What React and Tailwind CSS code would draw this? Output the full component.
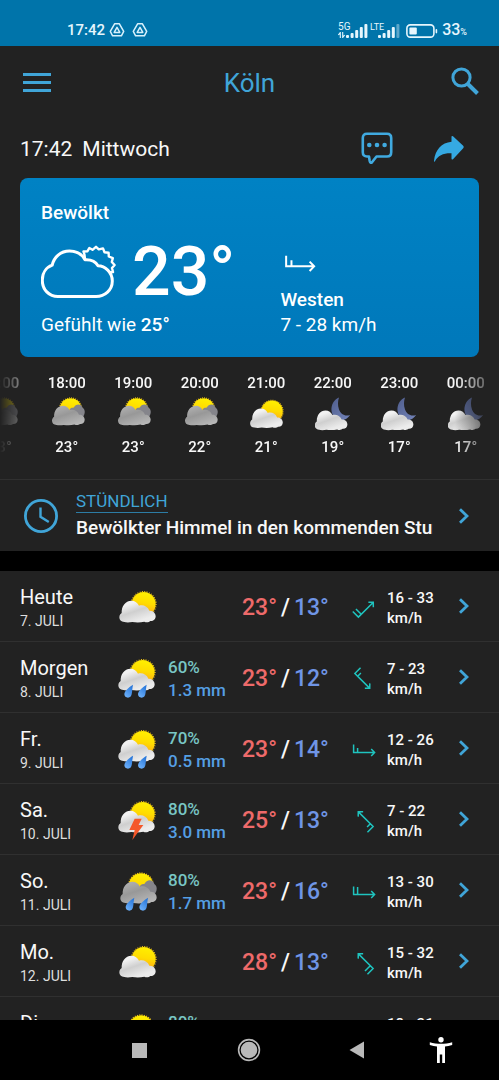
import React from "react";

const CLOUD = "M22 102C12 102 7 95 7 88C7 81 11 77 14 75C13 55 25 38 43 38C54 38 62 44 66 53C78 49 92 55 97 68C109 67 116 76 116 85C116 95 108 100 100 99C96 103 88 104 82 101C70 104 58 104 46 102C36 104 28 104 22 102Z";

function IconDefs() {
  return (
    <svg className="absolute h-0 w-0" aria-hidden="true">
      <defs>
        <linearGradient id="sun" x1="0.6" y1="0" x2="0.4" y2="1">
          <stop offset="0" stopColor="#fff000" />
          <stop offset="0.45" stopColor="#ffdc00" />
          <stop offset="1" stopColor="#ff9a1f" />
        </linearGradient>
        <linearGradient id="white-cloud" x1="0.2" y1="0.2" x2="0.6" y2="0.9">
          <stop offset="0" stopColor="#f2f2f2" />
          <stop offset="0.45" stopColor="#cfcfcf" />
          <stop offset="1" stopColor="#ececec" />
        </linearGradient>
        <linearGradient id="gray-cloud" x1="0.2" y1="0.1" x2="0.7" y2="1">
          <stop offset="0" stopColor="#adadad" />
          <stop offset="0.4" stopColor="#989898" />
          <stop offset="1" stopColor="#b8b8b8" />
        </linearGradient>
        <linearGradient id="moon" x1="0" y1="0" x2="1" y2="1">
          <stop offset="0" stopColor="#4f5d8c" />
          <stop offset="1" stopColor="#7485bb" />
        </linearGradient>
        <linearGradient id="drop" x1="0.8" y1="0" x2="0.2" y2="1">
          <stop offset="0" stopColor="#2373d8" />
          <stop offset="1" stopColor="#6fb2fb" />
        </linearGradient>
      </defs>
    </svg>
  );
}

function Sun({ x, y }) {
  return (
    <g>
      <circle cx={x} cy={y} r="36" fill="url(#sun)" />
      <circle cx={x} cy={y} r="37" fill="none" stroke="#f6c614" strokeWidth="4" strokeDasharray="3 4" />
    </g>
  );
}

function Drops() {
  return (
    <g fill="url(#drop)">
      <path d="M48 77C36 84 22 96 22 106C22 112 27 116 33 116C39 116 43 112 44 106C46 96 46 86 48 77Z" />
      <path d="M89 77C77 84 63 96 63 106C63 112 68 116 74 116C80 116 84 112 85 106C87 96 87 86 89 77Z" />
    </g>
  );
}

function WeatherIcon({ kind, className }) {
  return (
    <svg viewBox="0 0 120 120" className={className} role="img" aria-label={kind}>
      {kind === "sunny" && (
        <>
          <Sun x={80} y={48} />
          <path d={CLOUD} fill="url(#white-cloud)" />
        </>
      )}
      {(kind === "rain" || kind === "storm") && (
        <>
          <g transform="translate(-3 -9)">
            <Sun x={80} y={48} />
            <path d={CLOUD} fill="url(#white-cloud)" />
          </g>
          {kind === "rain" ? (
            <Drops />
          ) : (
            <path d="M53 53H74L65 72H79L46 117L53 87H37Z" fill="#f4582a" />
          )}
        </>
      )}
      {(kind === "cloudy" || kind === "showers") && (
        <>
          <Sun x={72} y={40} />
          <path d="M68 44C72 34 80 36 83 35C88 22 108 20 112 36C121 42 121 54 115 64L80 62Z" fill="#85858b" />
          <g transform="translate(3 -9)">
            <path d={CLOUD} fill="url(#gray-cloud)" />
          </g>
          {kind === "showers" && (
            <g transform="translate(4 0)">
              <Drops />
            </g>
          )}
        </>
      )}
      {kind === "night" && (
        <>
          <path d="M80 2C50 14 45 60 75 74C92 82 108 74 117 60C100 66 86 58 80 42C75 28 76 14 80 2Z" fill="url(#moon)" />
          <g transform="translate(-8 7)">
            <path d={CLOUD} fill="url(#white-cloud)" />
          </g>
        </>
      )}
    </svg>
  );
}

function WindArrow({ angle, strong, className }) {
  return (
    <svg viewBox="0 0 24 24" className={className} fill="none" stroke="currentColor" strokeWidth="1.5" aria-hidden="true">
      <g transform={`rotate(${angle} 12 12)`}>
        <path d={`M1.6 6.5V14.5H22.4M19.2 11L22.6 14.5L19.2 18M5.6 ${strong ? 7 : 10}V14.5`} />
      </g>
    </svg>
  );
}

function Chevron() {
  return (
    <svg viewBox="0 0 10 16" className="h-4 w-2.5" fill="none" stroke="#40a5d8" strokeWidth="2.8" aria-hidden="true">
      <path d="M1 1.3L8 8L1 14.7" />
    </svg>
  );
}

function TriangleLogo() {
  return (
    <svg viewBox="0 0 16 16" className="h-4 w-4" fill="none" stroke="#d8f1fc" strokeWidth="1.5" strokeLinejoin="round" aria-hidden="true">
      <path d="M5.6 1.8H10.4L14.7 9.4L12.4 13.8H3.6L1.3 9.4Z" />
      <path d="M8 5.4L10.8 10.4H5.2Z" />
    </svg>
  );
}

function SignalBars({ weak }) {
  return (
    <svg viewBox="0 0 22 14" className="h-3.5 w-[22px]" fill="#e6f6fd" aria-hidden="true">
      <rect x="0" y="11" width="3" height="3" rx="1" />
      <rect x="4.6" y="9" width="3" height="5" rx="1" />
      <rect x="9.2" y="6" width="3" height="8" rx="1" />
      <rect x="13.8" y="3" width="3" height="11" rx="1" />
      <rect x="18.4" y="0" width="3" height="14" rx="1" opacity={weak ? 0.4 : 1} />
    </svg>
  );
}

function StatusBar() {
  return (
    <div className="flex h-[46px] shrink-0 items-end justify-between bg-[#0074aa] pr-8 pb-2 pl-[67px] text-[#e6f6fd]">
      <div className="flex items-center">
        <span className="text-[15px] leading-4 font-medium">17:42</span>
        <div className="ml-1 flex gap-[7px]">
          <TriangleLogo />
          <TriangleLogo />
        </div>
      </div>
      <div className="flex items-end">
        <div className="flex w-[14px] flex-col items-start">
          <span className="text-[10px] leading-[10px]">5G</span>
          <svg viewBox="0 0 7 6" className="h-1.5 w-[7px]" fill="none" stroke="currentColor" strokeWidth="1.1" aria-hidden="true">
            <path d="M2.3 0V6M0.4 3L2.3 0.6M4.7 0V6M6.6 3L4.7 5.4" />
          </svg>
        </div>
        <div className="-ml-1.5"><SignalBars /></div>
        <span className="mb-1.5 ml-0.5 text-[9px] leading-[9px]">LTE</span>
        <div className="-ml-1.5"><SignalBars weak /></div>
        <svg viewBox="0 0 32 14" className="mr-1 ml-1.5 h-3.5 w-8" aria-hidden="true">
          <rect x="0.9" y="0.9" width="27" height="12.2" rx="3.4" fill="none" stroke="#e6f6fd" strokeWidth="1.6" />
          <rect x="3.4" y="3.4" width="7.4" height="7.2" rx="1" fill="#e6f6fd" />
          <rect x="29.6" y="5" width="1.6" height="4.4" rx="0.8" fill="#e6f6fd" />
        </svg>
        <span className="text-base leading-4 font-medium">33</span>
        <span className="text-[9px] leading-3 font-medium">%</span>
      </div>
    </div>
  );
}

const HOURS = [
  { time: "17:00", kind: "cloudy", temp: "23°" },
  { time: "18:00", kind: "cloudy", temp: "23°" },
  { time: "19:00", kind: "cloudy", temp: "23°" },
  { time: "20:00", kind: "cloudy", temp: "22°" },
  { time: "21:00", kind: "sunny", temp: "21°" },
  { time: "22:00", kind: "night", temp: "19°" },
  { time: "23:00", kind: "night", temp: "17°" },
  { time: "00:00", kind: "night", temp: "17°" },
];

const DAYS = [
  { day: "Heute", date: "7. JULI", kind: "sunny", high: 23, low: 13, angle: -45, strong: true, wind: "16 - 33" },
  { day: "Morgen", date: "8. JULI", kind: "rain", chance: "60%", amount: "1.3 mm", high: 23, low: 12, angle: 45, wind: "7 - 23" },
  { day: "Fr.", date: "9. JULI", kind: "rain", chance: "70%", amount: "0.5 mm", high: 23, low: 14, angle: 0, wind: "12 - 26" },
  { day: "Sa.", date: "10. JULI", kind: "storm", chance: "80%", amount: "3.0 mm", high: 25, low: 13, angle: -135, wind: "7 - 22" },
  { day: "So.", date: "11. JULI", kind: "showers", chance: "80%", amount: "1.7 mm", high: 23, low: 16, angle: 0, strong: true, wind: "13 - 30" },
  { day: "Mo.", date: "12. JULI", kind: "sunny", high: 28, low: 13, angle: -135, strong: true, wind: "15 - 32" },
  { day: "Di.", date: "13. JULI", kind: "showers", chance: "80%", amount: "2.1 mm", high: 24, low: 14, angle: 0, strong: true, wind: "18 - 31" },
];

function DayRow({ d }) {
  return (
    <li>
      <a
        href="#tag"
        className="grid h-[71px] grid-cols-[97fr_51fr_74fr_110fr_35fr_72fr_20fr] items-center border-b border-[#303030] px-5 pt-1"
      >
        <div>
          <div className="text-xl leading-6">{d.day}</div>
          <div className="pt-0.5 text-sm leading-5 text-[#dedede]">{d.date}</div>
        </div>
        <WeatherIcon kind={d.kind} className="h-10 w-10" />
        <div className="text-[17px] leading-[23px] font-medium whitespace-nowrap">
          <div className="text-[#79c6c4]">{d.chance}</div>
          <div className="text-[#559fe4]">{d.amount}</div>
        </div>
        <div className="flex gap-1 text-[23px] leading-8 font-medium">
          <span className="text-[#ee6a6a]">{d.high}°</span>
          <span>/</span>
          <span className="text-[#6f95e6]">{d.low}°</span>
        </div>
        <WindArrow angle={d.angle} strong={d.strong} className="h-6 w-6 text-[#1fc4bf]" />
        <div className="text-[15px] leading-5 font-medium">
          <div className="whitespace-nowrap">{d.wind}</div>
          <div>km/h</div>
        </div>
        <div className="pb-1">
          <Chevron />
        </div>
      </a>
    </li>
  );
}

export default function App() {
  return (
    <div className="flex h-screen flex-col overflow-hidden bg-[#222222] font-[Roboto,sans-serif] text-[#f8f8f8]">
      <IconDefs />
      <StatusBar />
      <main className="min-h-0 flex-1 overflow-hidden">
        <header className="flex h-[73px] items-center justify-between px-5 text-[#40a5d8]">
          <button type="button" aria-label="Menü" className="flex w-8 flex-col gap-[5px] pl-[3px]">
            <span className="h-[3px] w-7 bg-current" />
            <span className="h-[3px] w-7 bg-current" />
            <span className="h-[3px] w-7 bg-current" />
          </button>
          <h1 className="text-[26px] leading-8">Köln</h1>
          <button type="button" aria-label="Suche" className="flex w-8 justify-end pb-1">
            <svg viewBox="0 0 28 28" className="h-7 w-7" fill="none" stroke="currentColor" strokeWidth="3" aria-hidden="true">
              <circle cx="10.5" cy="10.5" r="8.6" />
              <path d="M16.6 16.8L26.5 26.5" strokeWidth="4" />
            </svg>
          </button>
        </header>

        <div className="flex h-[59px] items-center px-5">
          <div className="flex flex-1 gap-2.5 text-[21px] leading-7">
            <time>17:42</time>
            <span>Mittwoch</span>
          </div>
          <div className="flex items-center gap-10 pr-[14px] text-[#40aae0]">
            <button type="button" aria-label="Kommentare" className="pb-0.5">
              <svg viewBox="0 0 32 32" className="h-8 w-8" fill="none" stroke="currentColor" strokeWidth="2.6" strokeLinejoin="round" aria-hidden="true">
                <path d="M6 1.8H26Q30.2 1.8 30.2 6V20.3Q30.2 24.5 26 24.5H15.5L11 30.3Q9.2 31.5 8.7 29L8 24.5H6Q1.8 24.5 1.8 20.3V6Q1.8 1.8 6 1.8Z" />
                <g fill="currentColor" stroke="none">
                  <circle cx="8.3" cy="13" r="2.3" />
                  <circle cx="16" cy="13" r="2.3" />
                  <circle cx="23.6" cy="13" r="2.3" />
                </g>
              </svg>
            </button>
            <button type="button" aria-label="Teilen">
              <svg viewBox="0 0 32 28" className="h-7 w-8" fill="#35a9e2" aria-hidden="true">
                <path d="M18.5 1.8Q18.5 0.6 20 1.3L30.2 10.8Q31.4 12 30.2 13.2L20 24.3Q18.5 25.2 18.5 23.6V18.3C10.5 18 5 20.5 2 26.2Q1 27.5 1 25.8C2.2 15 8.5 7.8 18.5 6.8Z" />
              </svg>
            </button>
          </div>
        </div>

        <section className="mx-5 grid h-[179px] grid-cols-[240fr_178fr] items-end rounded-lg bg-linear-to-b from-[#0082c4] to-[#0078ba] px-[21px] pb-5 text-white">
          <div>
            <h2 className="text-[19px] leading-6 font-medium">Bewölkt</h2>
            <div className="mt-2 mb-0.5 flex h-[78px] items-center gap-4">
              <svg viewBox="0 0 75 54" className="h-[54px] w-[75px] shrink-0" fill="none" stroke="currentColor" strokeWidth="2.4" strokeLinejoin="round" aria-hidden="true">
                <path d="M17 51.5H55C64 51.5 71.3 45 71.3 36C71.3 27 64 21 57 20.8C54 15.5 49 14.5 44 14.8C41 9 35.5 6 28.5 6C19.5 6 13 12 11.2 20.2C5 22.5 1.3 28.5 1.3 35.2C1.3 44.5 8 51.5 17 51.5Z" strokeWidth="3" />
                <path d="M44 14.5L43.5 9.8L42.5 6.5L46.5 6.2L48.3 3L51.5 4.8L55 1.8L57.8 4.4L62 3.4L63.5 7.2L67.6 7.8L67.8 11.5L71.8 13.2L70.8 17L73.6 20L71 23L72 27L68.5 27.5" strokeWidth="2.4" />
              </svg>
              <span className="text-[68px] leading-[78px] font-medium">23°</span>
            </div>
            <p className="text-[19px] leading-6">
              Gefühlt wie <span className="font-medium">25°</span>
            </p>
          </div>
          <div>
            <WindArrow angle={0} className="mb-2 ml-1 h-8 w-8" />
            <div className="text-[19px] leading-[26px] font-medium">Westen</div>
            <div className="text-[19px] leading-6">7 - 28 km/h</div>
          </div>
        </section>

        <section className="h-[122px] overflow-hidden [mask-image:linear-gradient(to_right,transparent,black_44px,black_calc(100%-44px),transparent)]">
          <ul className="-ml-[33px] grid grid-cols-8 pt-4">
            {HOURS.map((h) => (
              <li key={h.time} className="flex flex-col items-center text-[15px] leading-5 font-medium">
                <span>{h.time}</span>
                <WeatherIcon kind={h.kind} className="my-1 h-9 w-9" />
                <span>{h.temp}</span>
              </li>
            ))}
          </ul>
        </section>

        <a href="#stuendlich" className="grid h-[72px] grid-cols-[56px_minmax(0,1fr)_46px] items-center border-t border-[#303030] px-5">
          <svg viewBox="0 0 36 36" className="ml-[3px] h-9 w-9" fill="none" stroke="#40a5d8" strokeWidth="2.8" aria-hidden="true">
            <circle cx="18" cy="18" r="15.6" />
            <path d="M17.5 9.5V18.8L25.8 24" strokeWidth="2.4" />
          </svg>
          <div className="overflow-hidden">
            <span className="inline-block border-b border-[#2c7ca5] text-[17px] leading-[22px] text-[#40a5d8]">STÜNDLICH</span>
            <div className="overflow-hidden text-[19px] leading-7 font-medium whitespace-nowrap">
              Bewölkter Himmel in den kommenden Stunden
            </div>
          </div>
          <div className="flex justify-end pr-2.5">
            <Chevron />
          </div>
        </a>

        <div className="h-5 bg-black" />

        <ul>
          {DAYS.map((d) => (
            <DayRow key={d.date} d={d} />
          ))}
        </ul>
      </main>

      <nav className="flex h-[60px] shrink-0 items-center bg-black">
        <div className="grid flex-1 grid-cols-[85fr_110fr_110fr_106fr_62fr_27fr] items-center">
          <span />
          <button type="button" aria-label="Übersicht" className="flex justify-center">
            <span className="h-[15px] w-[15px] bg-[#b9b9b9]" />
          </button>
          <button type="button" aria-label="Startseite" className="flex justify-center">
            <svg viewBox="0 0 24 24" className="h-6 w-6" aria-hidden="true">
              <circle cx="12" cy="12" r="10.4" fill="none" stroke="#b9b9b9" strokeWidth="1.6" />
              <circle cx="12" cy="12" r="8.3" fill="#b9b9b9" />
            </svg>
          </button>
          <button type="button" aria-label="Zurück" className="flex justify-center">
            <svg viewBox="0 0 16 18" className="h-[18px] w-4" fill="#b9b9b9" aria-hidden="true">
              <path d="M15 0.5V17.5L0.5 9Z" />
            </svg>
          </button>
          <button type="button" aria-label="Bedienungshilfen" className="flex justify-center">
            <svg viewBox="0 0 24 26" className="h-[26px] w-6" fill="#ffffff" aria-hidden="true">
              <circle cx="12" cy="2.8" r="2.7" />
              <path d="M0.8 5.2C8 7.4 16 7.4 23.2 5.2V8C20.5 8.8 18.3 9.2 16 9.5V26H13.2V17.5H10.8V26H8V9.5C5.7 9.2 3.5 8.8 0.8 8Z" />
            </svg>
          </button>
          <span />
        </div>
      </nav>
    </div>
  );
}
